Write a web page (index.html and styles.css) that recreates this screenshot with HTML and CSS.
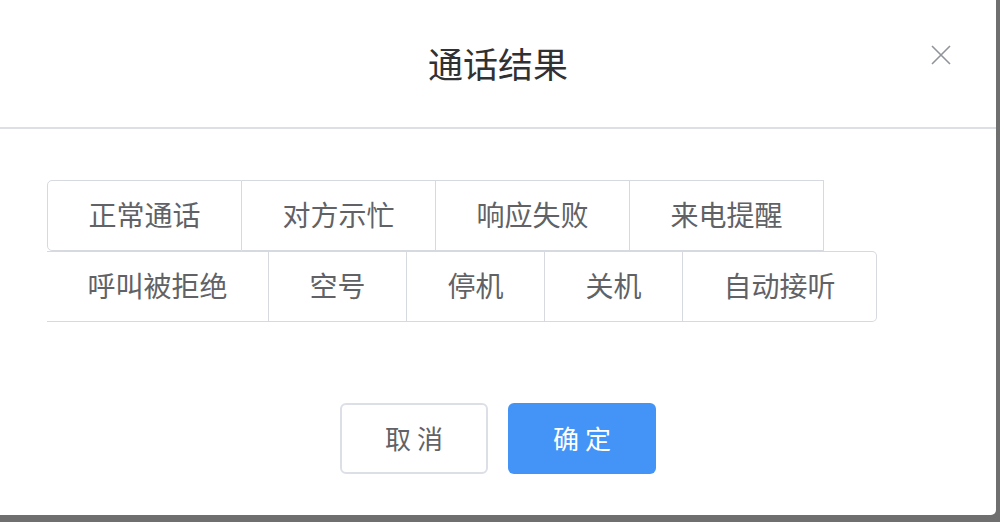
FILE: index.html
```html
<!DOCTYPE html>
<html lang="zh-CN">
<head>
<meta charset="utf-8">
<title>通话结果</title>
<link rel="stylesheet" href="styles.css">
</head>
<body>
<div class="backdrop">
  <div class="dialog">
    <div class="dialog-header">
      <h2 class="dialog-title">通话结果</h2>
      <button class="dialog-close" aria-label="关闭">
        <svg width="20" height="20" viewBox="0 0 20 20"><path d="M1 1 L19 19 M19 1 L1 19" stroke="#909399" stroke-width="1.6" fill="none"/></svg>
      </button>
    </div>
    <div class="dialog-body">
      <div class="radio-group">
        <label class="radio-btn">正常通话</label>
        <label class="radio-btn">对方示忙</label>
        <label class="radio-btn">响应失败</label>
        <label class="radio-btn">来电提醒</label>
        <label class="radio-btn">呼叫被拒绝</label>
        <label class="radio-btn">空号</label>
        <label class="radio-btn">停机</label>
        <label class="radio-btn">关机</label>
        <label class="radio-btn">自动接听</label>
      </div>
    </div>
    <div class="dialog-footer">
      <button class="btn btn-default">取 消</button>
      <button class="btn btn-primary">确 定</button>
    </div>
  </div>
</div>
</body>
</html>
```

FILE: styles.css
```css
html, body {
  margin: 0;
  padding: 0;
  width: 1000px;
  height: 522px;
  overflow: hidden;
  background: #6f6f6f;
  font-family: "Noto Sans CJK SC", "Noto Sans", sans-serif;
}

.backdrop {
  width: 1000px;
  height: 522px;
}

.dialog {
  width: 996px;
  height: 515px;
  background: #ffffff;
  border-radius: 0 0 5px 0;
  display: flex;
  flex-direction: column;
}

.dialog-header {
  height: 127px;
  border-bottom: 2px solid #dcdfe6;
  display: flex;
  align-items: center;
  justify-content: center;
  position: relative;
}

.dialog-title {
  margin: 0;
  font-size: 35px;
  font-weight: 400;
  color: #303133;
  line-height: 1;
  padding-bottom: 2px;
}

.dialog-close {
  position: absolute;
  left: 931px;
  top: 45px;
  width: 20px;
  height: 20px;
  padding: 0;
  border: 0;
  background: transparent;
  display: flex;
}

.dialog-body {
  padding: 51px 47px 0 47px;
}

.radio-group {
  display: flex;
  flex-wrap: wrap;
  width: 902px;
}

.radio-btn {
  box-sizing: border-box;
  height: 71px;
  padding: 0 40.5px 3px 40.5px;
  border: 1px solid #d6d9e0;
  border-left: 0;
  display: flex;
  align-items: center;
  justify-content: center;
  font-size: 28px;
  color: #606266;
  background: #fff;
  white-space: nowrap;
}

.radio-btn:first-child {
  border-left: 1px solid #d6d9e0;
  border-radius: 5px 0 0 5px;
}

.radio-btn:last-child {
  border-radius: 0 5px 5px 0;
}

.dialog-footer {
  display: flex;
  justify-content: center;
  gap: 20px;
  padding-top: 81px;
}

.btn {
  box-sizing: border-box;
  width: 148px;
  height: 71px;
  border-radius: 6px;
  font-family: "Noto Sans CJK SC", "Noto Sans", sans-serif;
  font-size: 26px;
  display: flex;
  align-items: center;
  justify-content: center;
  padding: 0 0 2px 0;
}

.btn-default {
  background: #fff;
  border: 2px solid #dcdfe6;
  color: #606266;
}

.btn-primary {
  background: #4394f6;
  border: 0;
  color: #fff;
}
```
